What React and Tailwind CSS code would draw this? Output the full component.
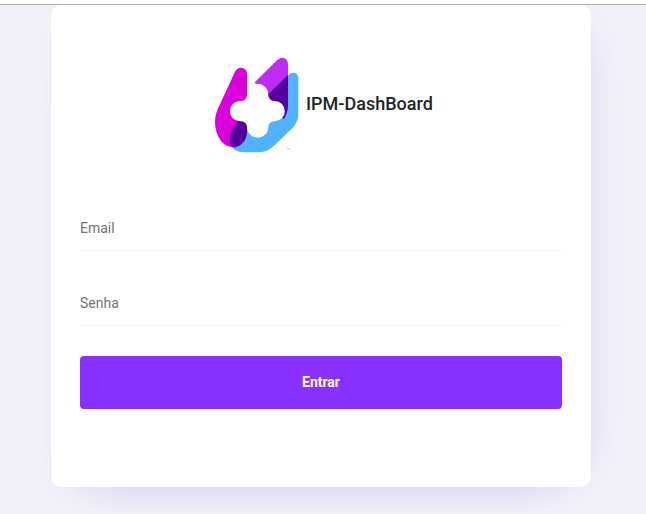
function Logo() {
  return (
    <svg viewBox="0 0 315 330" className="h-[110px] w-[105px] shrink-0" aria-hidden="true">
      <path fill="#51b3ff" d="M249 77Q254 68 265 68Q280 70 280 84V192Q280 216 263 233L209 286Q188 307 162 307H116Q86 307 75 283Q70 262 84 238L110 205H200L249 160Z" />
      <path fill="#d900dc" d="M90 65Q97 53 109 53Q126 55 126 72V247Q124 280 92 292Q64 293 48 273Q30 249 30 216Q30 196 37 180Z" />
      <path fill="#54009f" d="M126 205V247Q123 283 91 292Q79 291 75 281Q70 261 84 238Q94 220 106 205Z" />
      <path fill="#bf2bf2" d="M150 96L216 31Q227 20 239 25Q249 30 249 44V80L190 136L158 160Z" />
      <path fill="#54009f" d="M185 137L249 75V166Q249 190 236 207L185 165Z" />
      <path fill="#fff" d="M150 102C175 98 190 115 190 136A17 17 0 0 0 207 153H209A30.500 30.500 0 0 1 209 214H207A17 17 0 0 0 190 231A32 32 0 0 1 126 231A17 17 0 0 0 109 214H105A30.500 30.500 0 0 1 105 153H109A17 17 0 0 0 126 136V102Z" />
      <path fill="#b9ddfa" d="M246 294h9v4h-9z" />
    </svg>
  );
}

function Field({ label, type, className }) {
  return (
    <input
      type={type}
      placeholder={label}
      aria-label={label}
      className={`block h-[45px] w-full border-b border-[#f2f2f2] bg-transparent text-sm outline-none placeholder:text-[#757575] ${className}`}
    />
  );
}

export default function App() {
  return (
    <div className="flex h-[514px] w-[646px] flex-col overflow-hidden bg-white pt-1 font-[Roboto,sans-serif]">
      <div className="h-px shrink-0 bg-[#b0b0b0]" />
      <main className="flex-1 overflow-hidden bg-[#f2f1f7] pl-[51px]">
        <form className="flex h-[482px] w-[540px] flex-col rounded-[10px] bg-white px-[29px] pt-[45px] shadow-[0_34px_44px_-36px_rgba(120,60,215,0.2),32px_3px_44px_-34px_rgba(120,60,225,0.11),0_0_36px_-6px_rgba(140,110,255,0.05)]">
          <header className="flex h-[110px] pl-[125px]">
            <Logo />
            <h1 className="-ml-1 mt-[40px] whitespace-nowrap text-lg leading-7 font-medium text-[#212529]">IPM-DashBoard</h1>
          </header>
          <Field label="Email" type="email" className="mt-[46px]" />
          <Field label="Senha" type="password" className="mt-[30px]" />
          <button type="button" className="mt-[30px] h-[53px] rounded bg-[#8730ff] pb-0.5 text-sm font-bold text-white">
            Entrar
          </button>
        </form>
      </main>
    </div>
  );
}
